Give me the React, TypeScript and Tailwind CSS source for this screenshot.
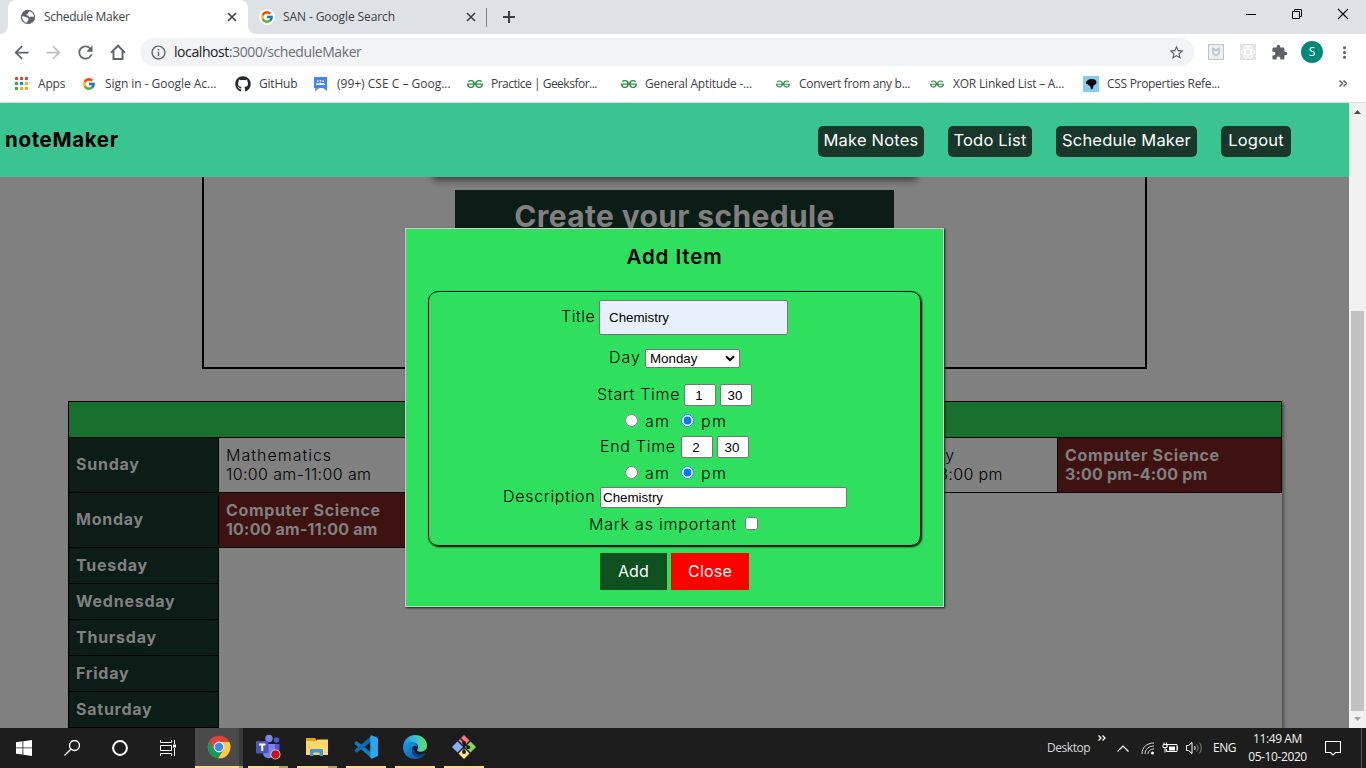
import type { ReactNode } from "react";
import { FcGoogle } from "react-icons/fc";
import { FaGithub } from "react-icons/fa";
import { SiGeeksforgeeks } from "react-icons/si";
import {
  MdArrowBack,
  MdArrowForward,
  MdExtension,
  MdInfoOutline,
  MdMoreVert,
  MdRefresh,
  MdStarBorder,
} from "react-icons/md";

const Cross = ({ className = "" }: { className?: string }) => (
  <svg viewBox="0 0 10 10" className={`size-[10px] shrink-0 ${className}`} stroke="#3c4043" strokeWidth="1.6">
    <path d="M1 1l8 8M9 1L1 9" />
  </svg>
);

const Globe = () => (
  <svg viewBox="0 0 16 16" className="size-4 shrink-0">
    <circle cx="8" cy="8" r="7.2" fill="#5f6368" />
    <path d="M9.2 2.2c2.6.5 4.6 2.600 4.800 5.300-.9.6-1.500 0-2.300 0-.9 0-1.400.7-2.300.4-.8-.3-.5-1.300-1.400-1.500-.8-.1-1.600.2-1.600-.6s1.600-.6 1.700-1.500c.1-.7.500-1.400 1.100-2.100zM2.100 7.200c1.200.1 2.900 0 3.900.9.9.8 2.300.6 2.500 1.600.2.900-.8 1.200-1 2-.1.700.2 1.500-.3 2.100-2.900-.4-5.200-2.900-5.100-6.600z" fill="#fff" />
  </svg>
);

const TabStrip = () => (
  <div className="flex h-[34px] bg-[#dee1e6]">
    <div className="flex w-2 bg-white">
      <div className="w-2 rounded-br-lg bg-[#dee1e6]" />
    </div>
    <div className="flex w-[240px] items-center rounded-t-lg bg-white pl-3">
      <Globe />
      <span className="ml-2 w-[183px] text-[12px] tracking-[-0.28px] text-[#3c4043]">Schedule Maker</span>
      <Cross />
    </div>
    <div className="flex w-2 bg-white">
      <div className="w-2 rounded-bl-lg bg-[#dee1e6]" />
    </div>
    <div className="flex w-[230px] items-center pl-[3px]">
      <span className="flex size-4 items-center justify-center rounded-full bg-white">
        <FcGoogle className="size-[14px]" />
      </span>
      <span className="ml-2 w-[183px] text-[12px] tracking-[-0.1px] text-[#3c4043]">SAN - Google Search</span>
      <Cross />
    </div>
    <div className="mt-2 h-[19px] w-px bg-[#808387]" />
    <div className="flex w-[44px] items-center justify-center">
      <svg viewBox="0 0 12 12" className="size-3" stroke="#3c4043" strokeWidth="2">
        <path d="M6 0v12M0 6h12" />
      </svg>
    </div>
    <div className="ml-auto flex h-7 w-[138px] items-center">
      <div className="flex w-[46px] justify-center">
        <div className="h-px w-[10px] bg-black" />
      </div>
      <svg viewBox="0 0 46 12" className="h-3 w-[46px]" fill="none" stroke="#000">
        <path d="M18.500 3.500h7v7h-7zM20.500 3.500v-2h7v7h-2" />
      </svg>
      <svg viewBox="0 0 46 12" className="h-3 w-[46px]" stroke="#000" strokeWidth="1.100">
        <path d="M18 1l10 10M28 1L18 11" />
      </svg>
    </div>
  </div>
);

const HomeOutline = () => (
  <svg viewBox="0 0 16 16" className="size-4 shrink-0" fill="none" stroke="#5f6368" strokeWidth="1.900">
    <path d="M1 8.600L8 1.700l7 6.900M3.500 7v8h9V7" />
  </svg>
);

const Toolbar = () => (
  <div className="flex h-[36px] items-center bg-white pl-[11px] text-[#5f6368]">
    <div className="flex w-[129px] items-center gap-[11px]">
      <MdArrowBack className="size-[21px]" />
      <MdArrowForward className="size-[21px] text-[#bdc1c6]" />
      <MdRefresh className="size-[21px]" />
      <span className="ml-[3px]">
        <HomeOutline />
      </span>
    </div>
    <div className="flex h-7 w-[1054px] items-center rounded-full bg-[#f1f3f4] px-[10px]">
      <MdInfoOutline className="size-[17px]" />
      <span className="ml-[7px] pb-px text-[14px] tracking-[-0.42px] text-[#6b6f74]">
        <span className="text-[#202124]">localhost</span>:3000/scheduleMaker
      </span>
      <MdStarBorder className="-mr-px ml-auto size-[17px]" />
    </div>
    <div className="ml-[14px] flex items-center gap-4">
      <div className="flex size-4 items-center justify-center border border-[#bfc6cb] bg-[#eceeef]">
        <svg viewBox="0 0 10 10" className="size-[10px]" fill="none" stroke="#bfc6cb" strokeWidth="1.600">
          <path d="M2 1.500v5L5 8.500l3-2v-5L5 3.500z" />
        </svg>
      </div>
      <div className="flex size-4 items-center justify-center bg-[#e4e4e4]">
        <svg viewBox="0 0 16 16" className="size-4" fill="none" stroke="#fff" strokeWidth="1">
          <ellipse cx="8" cy="8" rx="6.500" ry="2.600" />
          <ellipse cx="8" cy="8" rx="6.500" ry="2.600" transform="rotate(60 8 8)" />
          <ellipse cx="8" cy="8" rx="6.500" ry="2.600" transform="rotate(120 8 8)" />
        </svg>
      </div>
      <MdExtension className="-ml-px size-[17px]" />
    </div>
    <div className="ml-[13px] flex size-[22px] items-center justify-center rounded-full bg-[#00897b] text-[12px] text-white">S</div>
    <MdMoreVert className="ml-3 size-[19px]" />
  </div>
);

const Gfg = () => <SiGeeksforgeeks className="size-4 text-[#2f8d46]" />;

const Bookmark = ({ icon, label, className }: { icon: ReactNode; label: string; className: string }) => (
  <div className={`flex shrink-0 items-center gap-2 whitespace-nowrap ${className}`}>
    <span className="flex w-4 shrink-0 justify-center">{icon}</span>
    <span>{label}</span>
  </div>
);

const AppsGrid = () => (
  <svg viewBox="0 0 13 13" className="-ml-px size-[13px]">
    <path fill="#ea4335" d="M0 0h3v3H0zM5 0h3v3H5zM10 0h3v3h-3z" />
    <path fill="#34a853" d="M0 5h3v3H0zM0 10h3v3H0z" />
    <path fill="#1a83e8" d="M5 5h3v3H5z" />
    <path fill="#f9ab00" d="M10 5h3v3h-3zM5 10h3v3H5zM10 10h3v3h-3z" />
  </svg>
);

const GroupsIcon = () => (
  <svg viewBox="0 0 14 16" className="h-4 w-[14px]">
    <path fill="#4285f4" d="M0 1h13v14l-4-3H0z" />
    <path fill="#9a9a9a" d="M1 12h5l-5 3.500z" />
    <path fill="#fff" d="M2 9V8l1.500-1L5 7.500l1.500-1 1.500 1L9.500 7 11 8v1zM3 4.500h1.500V6H3zM5.700 4h1.600v1.600H5.700zM8.500 4.500H10V6H8.500z" />
  </svg>
);

const CssRefIcon = () => (
  <svg viewBox="0 0 16 16" className="size-4">
    <path fill="#84cdf1" d="M0 0h16v16H0z" />
    <path d="M8 3c3-.5 5.500 1 5.500 3.200 0 2-1.700 2.700-3 3L10 12.500 8 13.500l-.8-3.500C6 9.500 5 9 4.500 8 3 8.500 2.500 7 3.500 5.500 4.500 4 6 3 8 3z" />
  </svg>
);

const Bookmarks = () => (
  <div className="flex h-[33px] items-center border-b border-[#dadce0] bg-white pb-[5px] pl-[14px] text-[12px] text-[#3c4043]">
    <Bookmark className="w-[67px] tracking-[-0.2px]" icon={<AppsGrid />} label="Apps" />
    <Bookmark className="w-[154px] tracking-[-0.05px]" icon={<FcGoogle className="size-[14px]" />} label="Sign in - Google Ac..." />
    <Bookmark className="w-[78px] tracking-[-0.2px]" icon={<FaGithub className="size-4 text-[#24292e]" />} label="GitHub" />
    <Bookmark className="w-[154px] tracking-[0px]" icon={<GroupsIcon />} label="(99+) CSE C – Goog..." />
    <Bookmark className="w-[154px] tracking-[-0.5px]" icon={<Gfg />} label="Practice | Geeksfor..." />
    <Bookmark className="w-[154px] tracking-[-0.23px]" icon={<Gfg />} label="General Aptitude -..." />
    <Bookmark className="w-[154px] tracking-[-0.3px]" icon={<SiGeeksforgeeks className="size-[14px] text-[#2f8d46]" />} label="Convert from any b..." />
    <Bookmark className="w-[154px] tracking-[-0.2px]" icon={<SiGeeksforgeeks className="size-[14px] text-[#2f8d46]" />} label="XOR Linked List – A..." />
    <Bookmark className="w-[154px] tracking-[-0.3px]" icon={<CssRefIcon />} label="CSS Properties Refe..." />
    <svg viewBox="0 0 8 7" className="ml-auto mr-[19px] h-[7px] w-2" fill="none" stroke="#5f6368" strokeWidth="1.500">
      <path d="M.5.500l3 3-3 3M4.500.500l3 3-3 3" />
    </svg>
  </div>
);

const navLinks = [
  { label: "Make Notes", width: "w-[106px]" },
  { label: "Todo List", width: "w-[84px]" },
  { label: "Schedule Maker", width: "w-[141px]" },
  { label: "Logout", width: "w-[70px]" },
];

const NavBar = () => (
  <header className="relative z-10 flex h-[74px] items-center bg-[#3ac492] pl-[5px] pr-[58px]">
    <h1 className="text-[20.500px] font-bold tracking-[0.65px] text-black">noteMaker</h1>
    <nav className="ml-auto mt-[3px] flex gap-6">
      {navLinks.map((l) => (
        <a key={l.label} className={`flex h-[31px] items-center justify-center whitespace-nowrap rounded-[5px] bg-[#19372b] pb-[2px] text-[16.500px] tracking-[0.2px] text-white ${l.width}`}>
          {l.label}
        </a>
      ))}
    </nav>
  </header>
);

const Lesson = ({ name, time, className, nameClass, timeClass }: { name: string; time: string; className: string; nameClass: string; timeClass: string }) => (
  <div className={`flex flex-col justify-center border-r border-black pl-[7px] leading-[19px] ${className}`}>
    <span className={nameClass}>{name}</span>
    <span className={timeClass}>{time}</span>
  </div>
);

const DayCell = ({ day }: { day: string }) => (
  <div className="flex w-[150px] shrink-0 items-center border-r border-black bg-[#0c1c16] pb-[2px] pl-[7px] font-bold tracking-[0.75px] text-[#808080]">{day}</div>
);

const important = {
  className: "bg-[#3f1212] font-bold text-[#808080]",
  nameClass: "tracking-[0.64px]",
  timeClass: "tracking-[0.2px]",
};
const regular = {
  className: "font-light text-black",
  nameClass: "tracking-[1px]",
  timeClass: "tracking-[0.37px]",
};

const Timetable = () => (
  <div className="ml-[68px] mt-8 w-[1214px] border-l border-t border-black text-[16px] shadow-[2px_2px_3px_rgba(0,0,0,0.4)]">
    <div className="h-9 border-b border-r border-black bg-[#18702f]" />
    <div className="flex h-[55px] border-b border-black">
      <DayCell day="Sunday" />
      <Lesson {...regular} className={`w-[321px] ${regular.className}`} name="Mathematics" time="10:00 am-11:00 am" />
      <Lesson {...regular} className={`w-[319px] ${regular.className}`} name="Physics" time="12:00 pm-1:00 pm" />
      <Lesson {...regular} className={`w-[199px] ${regular.className}`} nameClass="tracking-[0.700px]" name="Geography" time="2:00 pm-3:00 pm" />
      <Lesson {...important} className={`w-[224px] ${important.className}`} name="Computer Science" time="3:00 pm-4:00 pm" />
    </div>
    <div className="flex h-[55px]">
      <div className="flex border-b border-black">
        <DayCell day="Monday" />
        <Lesson {...important} className={`w-[321px] ${important.className}`} name="Computer Science" time="10:00 am-11:00 am" />
      </div>
    </div>
    {["Tuesday", "Wednesday", "Thursday", "Friday", "Saturday"].map((d) => (
      <div key={d} className="flex h-9">
        <div className="flex border-b border-black">
          <DayCell day={d} />
        </div>
      </div>
    ))}
  </div>
);

const Hero = () => (
  <section className="ml-[202px] flex h-[192px] w-[945px] flex-col items-center border-2 border-t-0 border-black">
    <div className="-mt-4 h-4 w-[480px] shadow-[0_2px_6px_2px_rgba(0,0,0,0.45)]" />
    <h2 className="mt-[13px] h-[52px] w-[439px] bg-[#0c1c16] text-center text-[30px] font-bold leading-[52px] tracking-[0.35px] text-[#808080]">
      Create your schedule
    </h2>
  </section>
);

const field = "rounded-[2px] border border-[#767676] bg-white font-['Liberation_Sans'] text-[13.33px] tracking-normal text-black outline-none";

const TimeRow = ({ label, labelClass, hour, minute, className }: { label: string; labelClass: string; hour: string; minute: string; className: string }) => (
  <div className={`flex h-[22px] items-center ${className}`}>
    <label className={`mt-[-1px] whitespace-nowrap ${labelClass}`}>{label}</label>
    <input className={`h-[22px] w-8 pr-[2px] text-center ${field}`} defaultValue={hour} />
    <input className={`ml-1 h-[22px] w-8 pr-[2px] text-center ${field}`} defaultValue={minute} />
  </div>
);

const Meridiem = ({ name, className }: { name: string; className: string }) => (
  <div className={`flex h-[19px] items-center pl-[196px] leading-[19px] ${className}`}>
    <input type="radio" name={name} className="m-0 size-[13px]" />
    <span className="ml-[7px] w-9 pt-[2px] tracking-[1.3px]">am</span>
    <input type="radio" name={name} defaultChecked className="m-0 size-[13px]" />
    <span className="ml-[7px] pt-[2px] tracking-[1.3px]">pm</span>
  </div>
);

const AddItemDialog = () => (
  <div className="absolute left-[405px] top-[125px] z-20 flex h-[379px] w-[539px] flex-col items-center border border-[#ccc] bg-[#2fe05e] text-[16px] text-black shadow-[1px_1px_2px_rgba(0,0,0,0.8)]">
    <h3 className="mt-[13px] h-[30px] text-[20.500px] font-semibold leading-[30px] tracking-[0.9px]">Add Item</h3>
    <form className="mt-[19px] h-[255px] w-[493px] rounded-[10px] border border-black pt-2 font-light leading-[19px] tracking-[0.7px] shadow-[1px_1px_2px_#000]">
      <div className="flex h-[35px] items-center pl-[132px]">
        <label className="mt-[-3px] w-[38px] tracking-[0.5px]">Title</label>
        <input className={`h-[35px] w-[189px] !bg-[#e8f0fe] pl-[9px] ${field}`} defaultValue="Chemistry" />
      </div>
      <div className="mt-[14px] flex h-[19px] items-center pl-[180px]">
        <label className="mt-[-3px] w-9 tracking-[1px]">Day</label>
        <div className={`flex h-[19px] w-[95px] items-center justify-between pl-1 pr-1 ${field}`}>
          Monday
          <svg viewBox="0 0 10 7" className="h-[7px] w-[10px]" fill="none" stroke="#000" strokeWidth="2">
            <path d="M1 1.200l4 4 4-4" />
          </svg>
        </div>
      </div>
      <TimeRow className="mt-4 pl-[168px]" label="Start Time" labelClass="w-[87px]" hour="1" minute="30" />
      <Meridiem className="mt-[5px]" name="start" />
      <TimeRow className="mt-[6px] pl-[171px]" label="End Time" labelClass="w-[81px]" hour="2" minute="30" />
      <Meridiem className="mt-[5px]" name="end" />
      <div className="mt-[5px] flex h-[21px] items-center pl-[74px]">
        <label className="mt-[-3px] w-[97px]">Description</label>
        <input className={`h-[21px] w-[247px] pl-[2px] ${field}`} defaultValue="Chemistry" />
      </div>
      <div className="mt-[6px] flex h-[19px] items-center pl-[160px]">
        <label className="w-[156px] whitespace-nowrap pt-[2px] tracking-[0.8px]">Mark as important</label>
        <input type="checkbox" className="m-0 size-[13px]" />
      </div>
    </form>
    <div className="mt-[7px] flex gap-1 tracking-[0.2px] text-white">
      <button className="h-[37px] w-[67px] bg-[#0e5020] pb-[2px]">Add</button>
      <button className="h-[37px] w-[78px] bg-[#ff0000] pb-[2px]">Close</button>
    </div>
  </div>
);

const ScrollBar = () => (
  <div className="flex w-[17px] flex-col items-center bg-[#f1f1f1]">
    <svg viewBox="0 0 17 17" className="size-[17px]" fill="#505050">
      <path d="M5 11l3.500-4 3.500 4z" />
    </svg>
    <div className="mt-[191px] h-[400px] w-[13px] bg-[#c1c1c1]" />
    <svg viewBox="0 0 17 17" className="size-[17px]" fill="#a3a3a3">
      <path d="M5 6l3.500 4L12 6z" />
    </svg>
  </div>
);

const ChromeLogo = () => (
  <svg viewBox="0 0 24 24" className="size-6">
    <circle cx="12" cy="12" r="11.300" fill="#db4437" />
    <path fill="#0f9d58" d="M2.200 6.400A11.300 11.300 0 0 0 11 23.200l5-8.500-4 2.300-5-2.500z" />
    <path fill="#ffcd40" d="M22.300 7H12l5 5-.5 3-5.300 8.300A11.300 11.300 0 0 0 22.300 7z" />
    <circle cx="12" cy="12" r="5.400" fill="#f1f1f1" />
    <circle cx="12" cy="12" r="4.200" fill="#4285f4" />
  </svg>
);

const TeamsLogo = () => (
  <svg viewBox="0 0 26 26" className="size-[26px]">
    <circle cx="21.500" cy="6" r="2.800" fill="#5059c9" />
    <path fill="#5059c9" d="M17 10h7.500v7c0 3-2.500 4-4.500 4z" />
    <circle cx="14" cy="4.500" r="3.700" fill="#7b83eb" />
    <path fill="#7b83eb" d="M8 10h12v8c0 8-12 8-12 1z" />
    <rect x="1" y="7" width="12.500" height="12.500" rx="1" fill="#4b53bc" />
    <path stroke="#fff" strokeWidth="2" d="M4 10.500h6.500M7.250 10.500V17" />
    <circle cx="20.500" cy="20.500" r="5" fill="#d8d8d8" />
    <circle cx="20.500" cy="20.500" r="4.200" fill="#c50f1f" />
  </svg>
);

const FolderLogo = () => (
  <svg viewBox="0 0 24 22" className="h-[22px] w-6">
    <path fill="#e5a316" d="M1 2h9l1.500 2v4H1z" />
    <path fill="#ffd768" d="M1 5h10l1.500-1.500H23V19H1z" />
    <path fill="#3d94dc" d="M5 20v-5.500c0-1 .5-1.500 1.500-1.500h10c1 0 1.500.5 1.500 1.500V20h-3.500v-3.500h-6V20z" />
  </svg>
);

const CodeLogo = () => (
  <svg viewBox="0 0 24 24" className="size-6">
    <path fill="#0d7dc4" d="M.5 7.800L2.500 6l15.500 12v5.500L1 9.200z" />
    <path fill="#0a6cb0" d="M.5 15.800l2 2L18 6V.5L1 14.500z" />
    <path fill="#2aa7f0" d="M17.500.3L24 3v18l-6.500 2.700c-.7-.3-1.200-1.200-1.200-1.700V2c0-.8.5-1.500 1.200-1.700z" />
  </svg>
);

const EdgeLogo = () => (
  <svg viewBox="0 0 24 24" className="size-6">
    <defs>
      <linearGradient id="edgeTop" x1="0" y1="0.500" x2="1" y2="0.500">
        <stop offset="0" stopColor="#2293dc" />
        <stop offset="0.500" stopColor="#35c1df" />
        <stop offset="1" stopColor="#66e05a" />
      </linearGradient>
      <linearGradient id="edgeLow" x1="0" y1="0" x2="1" y2="1">
        <stop offset="0" stopColor="#1b9de2" />
        <stop offset="1" stopColor="#0c4fa3" />
      </linearGradient>
    </defs>
    <path fill="url(#edgeTop)" d="M.2 11C1 4.500 6 0 12.200 0 19 0 24 5 24 10.500c0 4-3 6.200-6 6.200-3.500 0-4.500-1.200-3.500-2.700 2-3-.5-6.500-4.500-6.500C5.500 7.500 1.500 9 .2 11z" />
    <path fill="url(#edgeLow)" d="M.1 12C.5 7.500 5 6.300 9 6.800c3.500.4 5.500 2.700 5.300 5.200C12 9 8.500 12 9 15c.5 4 5 5.500 8.500 5 2-.3 3.500-1.300 4.800-1.500C20 22 16.500 24 12 24 5.500 24-.3 19 .1 12z" />
    <path fill="#123f8c" d="M11 11.500c-4 3-2.500 10 4 11 3.500-.5 6-2.500 7.300-4.200-6 3-13 .5-11.300-6.800z" />
  </svg>
);

const GitLogo = () => (
  <svg viewBox="0 0 24 24" className="size-6">
    <path fill="#f37c7c" d="M12 0l5.500 5.500L12 11 6.500 5.500z" />
    <path fill="#80b3ff" d="M5.500 6.500L11 12l-5.500 5.500L0 12z" />
    <path fill="#8dd35f" d="M18.500 6.500L24 12l-5.500 5.500L13 12z" />
    <path fill="#ffe680" d="M12 13l5.500 5.500L12 24l-5.500-5.500z" />
    <path fill="none" stroke="#1d1d1d" strokeWidth="1.500" d="M8.500 3.500L12 7v11M12 8l4 4" />
    <circle cx="12" cy="8" r="2" fill="#1d1d1d" />
    <circle cx="12" cy="17" r="2" fill="#1d1d1d" />
    <circle cx="16.300" cy="12.300" r="2" fill="#1d1d1d" />
  </svg>
);

const TaskApp = ({ children, stacked = false, active = false }: { children: ReactNode; stacked?: boolean; active?: boolean }) => (
  <div className={`flex shrink-0 flex-col justify-between ${active ? "w-12 bg-linear-to-r from-[#4a4a4a] from-[92%] to-[#3a3a3a] to-[92%]" : "w-10"}`}>
    <div className="flex h-[38px] items-center justify-center">{children}</div>
    <div className="flex h-[2px] bg-[#fcdc83]">{stacked && <div className={`ml-auto bg-[#b89f62] ${active ? "w-1" : "w-[9px]"}`} />}</div>
  </div>
);

const Taskbar = () => (
  <footer className="flex h-10 bg-[#1d1d1d] text-[12px] text-[#f2f2f2]">
    <div className="flex w-[195px] items-center pl-4">
      <svg viewBox="0 0 16 16" className="size-4" fill="#fff">
        <path d="M0 2.200L6.500 1.300v6.200H0zM7.300 1.200L16 0v7.500H7.300zM0 8.300h6.500v6.300L0 13.700zM7.300 8.300H16V16l-8.700-1.200z" />
      </svg>
      <svg viewBox="0 0 16 16" className="ml-8 size-4" fill="none" stroke="#fff" strokeWidth="1.300">
        <circle cx="10.500" cy="5.500" r="5" />
        <path d="M6.800 9.200L.5 15.500" />
      </svg>
      <svg viewBox="0 0 16 16" className="ml-8 size-4" fill="none" stroke="#fff" strokeWidth="2">
        <circle cx="8" cy="8" r="6.900" />
      </svg>
      <svg viewBox="0 0 17 16" className="ml-8 h-4 w-[17px]" fill="none" stroke="#fff">
        <path d="M.5 0v2.500h11V0M.5 16v-2.500h11V16M.5 5.500h11v5H.5zM14.500 0v4M14.500 8v8" />
        <path fill="#fff" stroke="none" d="M13 4.500h3v3h-3z" />
      </svg>
    </div>
    <div className="flex gap-[9px]">
      <div className="-mr-1 flex">
        <TaskApp active stacked><ChromeLogo /></TaskApp>
      </div>
      <TaskApp stacked><TeamsLogo /></TaskApp>
      <TaskApp stacked><FolderLogo /></TaskApp>
      <TaskApp><CodeLogo /></TaskApp>
      <TaskApp><EdgeLogo /></TaskApp>
      <TaskApp><GitLogo /></TaskApp>
    </div>
    <div className="ml-auto flex w-[319px] items-center">
      <span className="w-[50px] tracking-[-0.45px] text-[#d8d8d8]">Desktop</span>
      <svg viewBox="0 0 8 6" className="mb-[21px] ml-px h-[6px] w-2" fill="none" stroke="#fff" strokeWidth="1.300">
        <path d="M.5.500L3 3 .5 5.500M4.500.500L7 3 4.500 5.500" />
      </svg>
      <svg viewBox="0 0 12 7" className="ml-[11px] h-[7px] w-3" fill="none" stroke="#fff" strokeWidth="1.200">
        <path d="M.5 6.500L6 1l5.500 5.500" />
      </svg>
      <svg viewBox="0 0 14 14" className="ml-[12px] size-[14px]" fill="none" stroke="#ddd" strokeWidth="1">
        <path d="M1 13C1 6 6 2 13 2M4 13c0-5 4-8 9-8M7 13c0-3 2.500-5 6-5" />
        <circle cx="11.500" cy="12" r="1.500" fill="#fff" stroke="none" />
      </svg>
      <svg viewBox="0 0 17 12" className="ml-[7px] h-3 w-[17px]" fill="none" stroke="#fff" strokeWidth="1">
        <path d="M5 4.500V2.500h10v7H4.500V7M15.500 4.500v3M1 2.500h5M1 3v2.500h4V3M2 2.500V.500M4.500 2.500V.500M3 5.500v5" />
        <path fill="#fff" stroke="none" d="M7 4.500h6v4H7z" />
      </svg>
      <svg viewBox="0 0 17 14" className="ml-[7px] h-[14px] w-[17px]" fill="none" stroke="#fff">
        <path d="M.5 4.500h2L6 1.500v11L2.500 9.500h-2zM8.500 5c.8 1 .8 3 0 4" />
        <path stroke="#888" d="M10.500 3.500c2 2 2 5 0 7M13 1.500c3 3 3 8 0 11" />
      </svg>
      <span className="ml-[10px] w-[28px] tracking-[-0.5px]">ENG</span>
      <div className="flex w-[73px] flex-col items-center whitespace-nowrap pb-[1px] leading-[17.500px] tracking-[-0.4px]">
        <span>11:49 AM</span>
        <span>05-10-2020</span>
      </div>
      <svg viewBox="0 0 16 16" className="ml-[11px] size-4" fill="none" stroke="#fff" strokeWidth="1.100">
        <path d="M.5 1.500h15v11h-5L8 15l-2.500-2.500h-5z" />
      </svg>
      <div className="ml-auto mr-1 h-10 w-px bg-[#555]" />
    </div>
  </footer>
);

export default function App() {
  return (
    <div className="flex h-[768px] w-[1366px] flex-col overflow-hidden font-['Open_Sans',sans-serif]">
      <TabStrip />
      <Toolbar />
      <Bookmarks />
      <main className="flex h-[625px] font-['Inter',sans-serif]">
        <div className="relative w-[1349px] overflow-hidden bg-[#808080]">
          <NavBar />
          <Hero />
          <Timetable />
          <AddItemDialog />
        </div>
        <ScrollBar />
      </main>
      <Taskbar />
    </div>
  );
}
